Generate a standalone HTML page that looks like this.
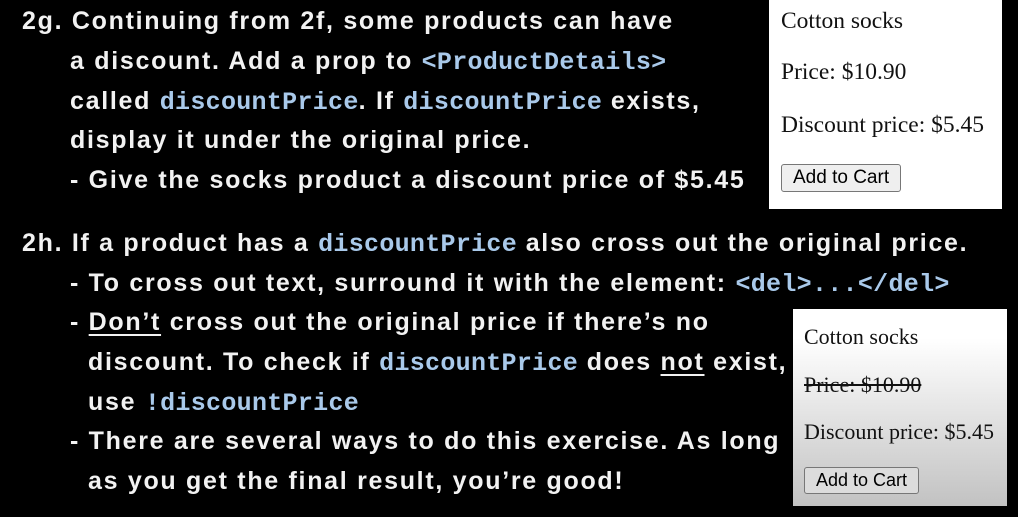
<!DOCTYPE html>
<html><head><meta charset="utf-8"><style>
body{margin:0;width:1018px;height:517px;background:#000;overflow:hidden;position:relative;font-family:"Liberation Sans",sans-serif}
.l{position:absolute;color:#f2f2f2;font-size:25px;font-weight:bold;letter-spacing:1.7px;white-space:nowrap;line-height:30px}
code{font-family:"Liberation Mono",monospace;font-weight:bold;color:#a9c9ea;font-size:25px;letter-spacing:0.3px}
u{text-decoration-thickness:2px;text-underline-offset:4px}
.box{position:absolute;font-family:"Liberation Serif",serif;font-size:23.5px;color:#111}
.box p{position:absolute;margin:0;white-space:nowrap}
.btn{position:absolute;font-family:"Liberation Sans",sans-serif;font-size:19px;border:1px solid #777;border-radius:3px;background:#efefef;padding:2px 11px;color:#000}
</style></head><body>
<div class="l" style="left:22px;top:6px">2g. Continuing from 2f, some products can have</div>
<div class="l" style="left:70px;top:46px">a discount. Add a prop to <code>&lt;ProductDetails&gt;</code></div>
<div class="l" style="left:70px;top:86px">called <code>discountPrice</code>. If <code>discountPrice</code> exists,</div>
<div class="l" style="left:70px;top:125px">display it under the original price.</div>
<div class="l" style="left:70px;top:165px">- Give the socks product a discount price of $5.45</div>

<div class="l" style="left:22px;top:228px">2h. If a product has a <code>discountPrice</code> also cross out the original price.</div>
<div class="l" style="left:70px;top:268px">- To cross out text, surround it with the element: <code>&lt;del&gt;...&lt;/del&gt;</code></div>
<div class="l" style="left:70px;top:307px">- <u>Don’t</u> cross out the original price if there’s no</div>
<div class="l" style="left:88px;top:347px">discount. To check if <code>discountPrice</code> does <u>not</u> exist,</div>
<div class="l" style="left:88px;top:387px">use <code>!discountPrice</code></div>
<div class="l" style="left:70px;top:426px">- There are several ways to do this exercise. As long</div>
<div class="l" style="left:88px;top:466px">as you get the final result, you’re good!</div>

<div class="box" style="left:769px;top:0;width:233px;height:209px;background:#fff">
<p style="left:12px;top:8px">Cotton socks</p>
<p style="left:12px;top:59px">Price: $10.90</p>
<p style="left:12px;top:112px">Discount price: $5.45</p>
<div class="btn" style="left:12px;top:164px">Add to Cart</div>
</div>
<div class="box" style="left:793px;top:309px;width:214px;height:197px;background:linear-gradient(#fff 15%,#c2c2c2);font-size:22px">
<p style="left:11px;top:15px">Cotton socks</p>
<p style="left:11px;top:63px;text-decoration:line-through">Price: $10.90</p>
<p style="left:11px;top:110px">Discount price: $5.45</p>
<div class="btn" style="left:11px;top:158px;background:#dcdcdc;font-size:18px">Add to Cart</div>
</div>
</body></html>
